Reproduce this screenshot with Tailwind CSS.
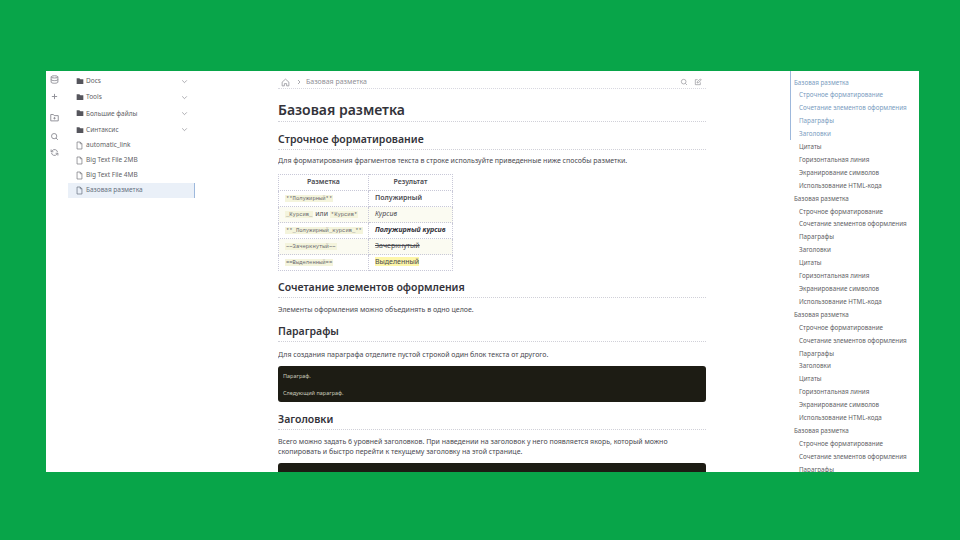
<!DOCTYPE html>
<html lang="ru">
<head>
    <meta charset="UTF-8">
    <title>Базовая разметка</title>
    <script src="https://cdn.jsdelivr.net/npm/@tailwindcss/browser@4"></script>
</head>
<body class="w-[960px] h-[540px] overflow-hidden bg-[#08a549] p-[71px_41px_68px_46px] font-['Noto_Sans','Open_Sans',sans-serif] text-[#4a4a50]">
    <div class="flex w-[873px] h-[401px] overflow-hidden bg-white">
        <!-- Иконки слева -->
        <div class="w-[22px] shrink-0 flex flex-col items-center pt-[4px] pr-[6px] text-[#8f8f96]">
            <svg class="w-[9px] h-[9px]" viewBox="0 0 24 24" fill="none" stroke="currentColor" stroke-width="2.500"><ellipse cx="12" cy="5" rx="9" ry="3"/><path d="M3 5v14c0 1.700 4 3 9 3s9-1.300 9-3V5M3 12c0 1.700 4 3 9 3s9-1.300 9-3"/></svg>
            <svg class="w-[9px] h-[9px] mt-[8px]" viewBox="0 0 24 24" fill="none" stroke="currentColor" stroke-width="2.500"><path d="M12 5v14M5 12h14"/></svg>
            <svg class="w-[9px] h-[9px] mt-[12px]" viewBox="0 0 24 24" fill="none" stroke="currentColor" stroke-width="2.500"><path d="M2 4h7l2 3h11v14H2zM12 11v6M9 14h6"/></svg>
            <svg class="w-[9px] h-[9px] mt-[10px]" viewBox="0 0 24 24" fill="none" stroke="currentColor" stroke-width="2.500"><circle cx="11" cy="11" r="7"/><path d="M16 16l5 5"/></svg>
            <svg class="w-[9px] h-[9px] mt-[7px]" viewBox="0 0 24 24" fill="none" stroke="currentColor" stroke-width="2.500"><path d="M20 11a8 8 0 0 0-14-4L3 10M3 4v6h6M4 13a8 8 0 0 0 14 4l3-3M21 20v-6h-6"/></svg>
        </div>

        <!-- Дерево файлов -->
        <div class="w-[127px] shrink-0 pt-[1px] mt-[1px] text-[6.500px] text-[#5f5f66]">
            <div class="flex items-center h-[16.200px] pl-[7.500px] pr-[7px] gap-[2.500px]">
                <svg class="w-[8px] h-[8px] text-[#55555c]" viewBox="0 0 24 24" fill="currentColor"><path d="M2 4h8l3 3h9v14H2z"/></svg>
                <span class="flex-1">Docs</span>
                <svg class="w-[7px] h-[7px] text-[#8f8f96]" viewBox="0 0 24 24" fill="none" stroke="currentColor" stroke-width="2.500"><path d="M4 8l8 8 8-8"/></svg>
            </div>
            <div class="flex items-center h-[16.200px] pl-[7.500px] pr-[7px] gap-[2.500px]">
                <svg class="w-[8px] h-[8px] text-[#55555c]" viewBox="0 0 24 24" fill="currentColor"><path d="M2 4h8l3 3h9v14H2z"/></svg>
                <span class="flex-1">Tools</span>
                <svg class="w-[7px] h-[7px] text-[#8f8f96]" viewBox="0 0 24 24" fill="none" stroke="currentColor" stroke-width="2.500"><path d="M4 8l8 8 8-8"/></svg>
            </div>
            <div class="flex items-center h-[16.200px] pl-[7.500px] pr-[7px] gap-[2.500px]">
                <svg class="w-[8px] h-[8px] text-[#55555c]" viewBox="0 0 24 24" fill="currentColor"><path d="M2 4h8l3 3h9v14H2z"/></svg>
                <span class="flex-1">Большие файлы</span>
                <svg class="w-[7px] h-[7px] text-[#8f8f96]" viewBox="0 0 24 24" fill="none" stroke="currentColor" stroke-width="2.500"><path d="M4 8l8 8 8-8"/></svg>
            </div>
            <div class="flex items-center h-[16.200px] pl-[7.500px] pr-[7px] gap-[2.500px]">
                <svg class="w-[8px] h-[8px] text-[#55555c]" viewBox="0 0 24 24" fill="currentColor"><path d="M2 4h8l3 3h9v14H2z"/></svg>
                <span class="flex-1">Синтаксис</span>
                <svg class="w-[7px] h-[7px] text-[#8f8f96]" viewBox="0 0 24 24" fill="none" stroke="currentColor" stroke-width="2.500"><path d="M4 8l8 8 8-8"/></svg>
            </div>
            <div class="flex items-center h-[15px] pl-[8px] gap-[3px]">
                <svg class="w-[7px] h-[9px] text-[#77777d]" viewBox="0 0 20 24" fill="none" stroke="currentColor" stroke-width="2"><path d="M3 2h9l5 5v15H3zM12 2v5h5"/></svg>
                <span>automatic_link</span>
            </div>
            <div class="flex items-center h-[15px] pl-[8px] gap-[3px]">
                <svg class="w-[7px] h-[9px] text-[#77777d]" viewBox="0 0 20 24" fill="none" stroke="currentColor" stroke-width="2"><path d="M3 2h9l5 5v15H3zM12 2v5h5"/></svg>
                <span>Big Text File 2MB</span>
            </div>
            <div class="flex items-center h-[15px] pl-[8px] gap-[3px]">
                <svg class="w-[7px] h-[9px] text-[#77777d]" viewBox="0 0 20 24" fill="none" stroke="currentColor" stroke-width="2"><path d="M3 2h9l5 5v15H3zM12 2v5h5"/></svg>
                <span>Big Text File 4MB</span>
            </div>
            <div class="flex items-center h-[15px] pl-[8px] gap-[3px] bg-[#eaf0f8] border-r border-[#9db8dc] text-[#66707f]">
                <svg class="w-[7px] h-[9px]" viewBox="0 0 20 24" fill="none" stroke="currentColor" stroke-width="2"><path d="M3 2h9l5 5v15H3zM12 2v5h5"/></svg>
                <span>Базовая разметка</span>
            </div>
        </div>

        <!-- Основной контент -->
        <div class="w-[428px] shrink-0 ml-[83px] overflow-hidden">
            <div class="flex items-center h-[18px] pt-[5px] border-b border-dotted border-[#d8d8e0] text-[7px] text-[#8f8f96]">
                <svg class="w-[9px] h-[9px] ml-[3px]" viewBox="0 0 24 24" fill="none" stroke="currentColor" stroke-width="2"><path d="M3 11l9-8 9 8v10h-6v-6H9v6H3z"/></svg>
                <svg class="w-[6px] h-[6px] ml-[6px] mr-[4px]" viewBox="0 0 24 24" fill="none" stroke="currentColor" stroke-width="3"><path d="M8 4l8 8-8 8"/></svg>
                <span class="flex-1">Базовая разметка</span>
                <svg class="w-[8px] h-[8px] mr-[6px]" viewBox="0 0 24 24" fill="none" stroke="currentColor" stroke-width="2"><circle cx="11" cy="11" r="7"/><path d="M16 16l5 5"/></svg>
                <svg class="w-[8px] h-[8px] mr-[4px]" viewBox="0 0 24 24" fill="none" stroke="currentColor" stroke-width="2"><path d="M11 5H4v15h15v-7M9 15l1-4 9-8 3 3-9 8z"/></svg>
            </div>

            <h1 class="mt-[11px] pb-[1px] text-[14px] leading-[20px] font-semibold text-[#33333a] border-b border-dotted border-[#d0d0d8]">Базовая разметка</h1>

            <h2 class="mt-[10px] pb-[2px] text-[10.500px] leading-[15px] font-semibold text-[#33333a] border-b border-dotted border-[#d0d0d8]">Строчное форматирование</h2>
            <p class="mt-[5px] text-[7px] leading-[12px]">Для форматирования фрагментов текста в строке используйте приведенные ниже способы разметки.</p>

            <table class="mt-[7px] text-[7px] border-collapse">
                <thead>
                    <tr class="h-[16px]">
                        <th class="w-[90px] border border-dotted border-[#c8c8d8] font-semibold">Разметка</th>
                        <th class="w-[84px] border border-dotted border-[#c8c8d8] font-semibold">Результат</th>
                    </tr>
                </thead>
                <tbody>
                    <tr class="h-[16px]">
                        <td class="border border-dotted border-[#c8c8d8] pl-[6px]"><code class="bg-[#f4f4dc] px-[1px] text-[5.500px] text-[#66666c]">**Полужирный**</code></td>
                        <td class="border border-dotted border-[#c8c8d8] pl-[6px] font-semibold">Полужирный</td>
                    </tr>
                    <tr class="h-[16px] bg-[#fbfbf2]">
                        <td class="border border-dotted border-[#c8c8d8] pl-[6px]"><code class="bg-[#f4f4dc] px-[1px] text-[5.500px] text-[#66666c]">_Курсив_</code> или <code class="bg-[#f4f4dc] px-[1px] text-[5.500px] text-[#66666c]">*Курсив*</code></td>
                        <td class="border border-dotted border-[#c8c8d8] pl-[6px] italic">Курсив</td>
                    </tr>
                    <tr class="h-[16px]">
                        <td class="border border-dotted border-[#c8c8d8] pl-[6px]"><code class="bg-[#f4f4dc] px-[1px] text-[5.500px] text-[#66666c]">**_Полужирный_курсив_**</code></td>
                        <td class="border border-dotted border-[#c8c8d8] pl-[6px] font-bold italic text-[#33333a]">Полужирный курсив</td>
                    </tr>
                    <tr class="h-[16px] bg-[#fbfbf2]">
                        <td class="border border-dotted border-[#c8c8d8] pl-[6px]"><code class="bg-[#f4f4dc] px-[1px] text-[5.500px] text-[#66666c]">~~Зачеркнутый~~</code></td>
                        <td class="border border-dotted border-[#c8c8d8] pl-[6px] line-through">Зачеркнутый</td>
                    </tr>
                    <tr class="h-[16px]">
                        <td class="border border-dotted border-[#c8c8d8] pl-[6px]"><code class="bg-[#f4f4dc] px-[1px] text-[5.500px] text-[#66666c]">==Выделенный==</code></td>
                        <td class="border border-dotted border-[#c8c8d8] pl-[6px]"><span class="bg-[#fdf6a8]">Выделенный</span></td>
                    </tr>
                </tbody>
            </table>

            <h2 class="mt-[8.500px] pb-[2px] text-[10.500px] leading-[15px] font-semibold text-[#33333a] border-b border-dotted border-[#d0d0d8]">Сочетание элементов оформления</h2>
            <p class="mt-[6.500px] text-[7px] leading-[12px]">Элементы оформления можно объединять в одно целое.</p>

            <h2 class="mt-[7.500px] pb-[2px] text-[10.500px] leading-[15px] font-semibold text-[#33333a] border-b border-dotted border-[#d0d0d8]">Параграфы</h2>
            <p class="mt-[7.500px] text-[7px] leading-[12px]">Для создания параграфа отделите пустой строкой один блок текста от другого.</p>

            <div class="mt-[5px] h-[35.500px] rounded-[3px] bg-[#1d1c14] px-[5px] pt-[6px] text-[5.500px] text-[#c8c8b8] flex flex-col gap-[9px]">
                <div class="leading-[8px]">Параграф.</div>
                <div class="leading-[8px]">Следующий параграф.</div>
            </div>

            <h2 class="mt-[10.500px] pb-[2px] text-[10.500px] leading-[15px] font-semibold text-[#33333a] border-b border-dotted border-[#d0d0d8]">Заголовки</h2>
            <p class="mt-[6.500px] text-[7px] leading-[10.500px]">Всего можно задать 6 уровней заголовков. При наведении на заголовок у него появляется якорь, который можно скопировать и быстро перейти к текущему заголовку на этой странице.</p>

            <div class="mt-[5px] h-[40px] rounded-[3px] bg-[#1d1c14]"></div>
        </div>

        <!-- Оглавление -->
        <div class="w-[129px] shrink-0 ml-[84px] text-[6.300px] leading-[12.900px] text-[#5f5f66] pt-[5.500px] whitespace-nowrap relative">
            <div class="absolute left-0 top-0 h-[69px] w-px bg-[#9db8dc]"></div>
            <div class="pl-[4px] text-[#7a9cc0]">Базовая разметка</div>
            <div class="pl-[9px] text-[#7a9cc0]">Строчное форматирование</div>
            <div class="pl-[9px] text-[#7a9cc0]">Сочетание элементов оформления</div>
            <div class="pl-[9px] text-[#7a9cc0]">Параграфы</div>
            <div class="pl-[9px] text-[#7a9cc0]">Заголовки</div>
            <div class="pl-[9px]">Цитаты</div>
            <div class="pl-[9px]">Горизонтальная линия</div>
            <div class="pl-[9px]">Экранирование символов</div>
            <div class="pl-[9px]">Использование HTML-кода</div>
            <div class="pl-[4px]">Базовая разметка</div>
            <div class="pl-[9px]">Строчное форматирование</div>
            <div class="pl-[9px]">Сочетание элементов оформления</div>
            <div class="pl-[9px]">Параграфы</div>
            <div class="pl-[9px]">Заголовки</div>
            <div class="pl-[9px]">Цитаты</div>
            <div class="pl-[9px]">Горизонтальная линия</div>
            <div class="pl-[9px]">Экранирование символов</div>
            <div class="pl-[9px]">Использование HTML-кода</div>
            <div class="pl-[4px]">Базовая разметка</div>
            <div class="pl-[9px]">Строчное форматирование</div>
            <div class="pl-[9px]">Сочетание элементов оформления</div>
            <div class="pl-[9px]">Параграфы</div>
            <div class="pl-[9px]">Заголовки</div>
            <div class="pl-[9px]">Цитаты</div>
            <div class="pl-[9px]">Горизонтальная линия</div>
            <div class="pl-[9px]">Экранирование символов</div>
            <div class="pl-[9px]">Использование HTML-кода</div>
            <div class="pl-[4px]">Базовая разметка</div>
            <div class="pl-[9px]">Строчное форматирование</div>
            <div class="pl-[9px]">Сочетание элементов оформления</div>
            <div class="pl-[9px]">Параграфы</div>
        </div>
    </div>
</body>
</html>
